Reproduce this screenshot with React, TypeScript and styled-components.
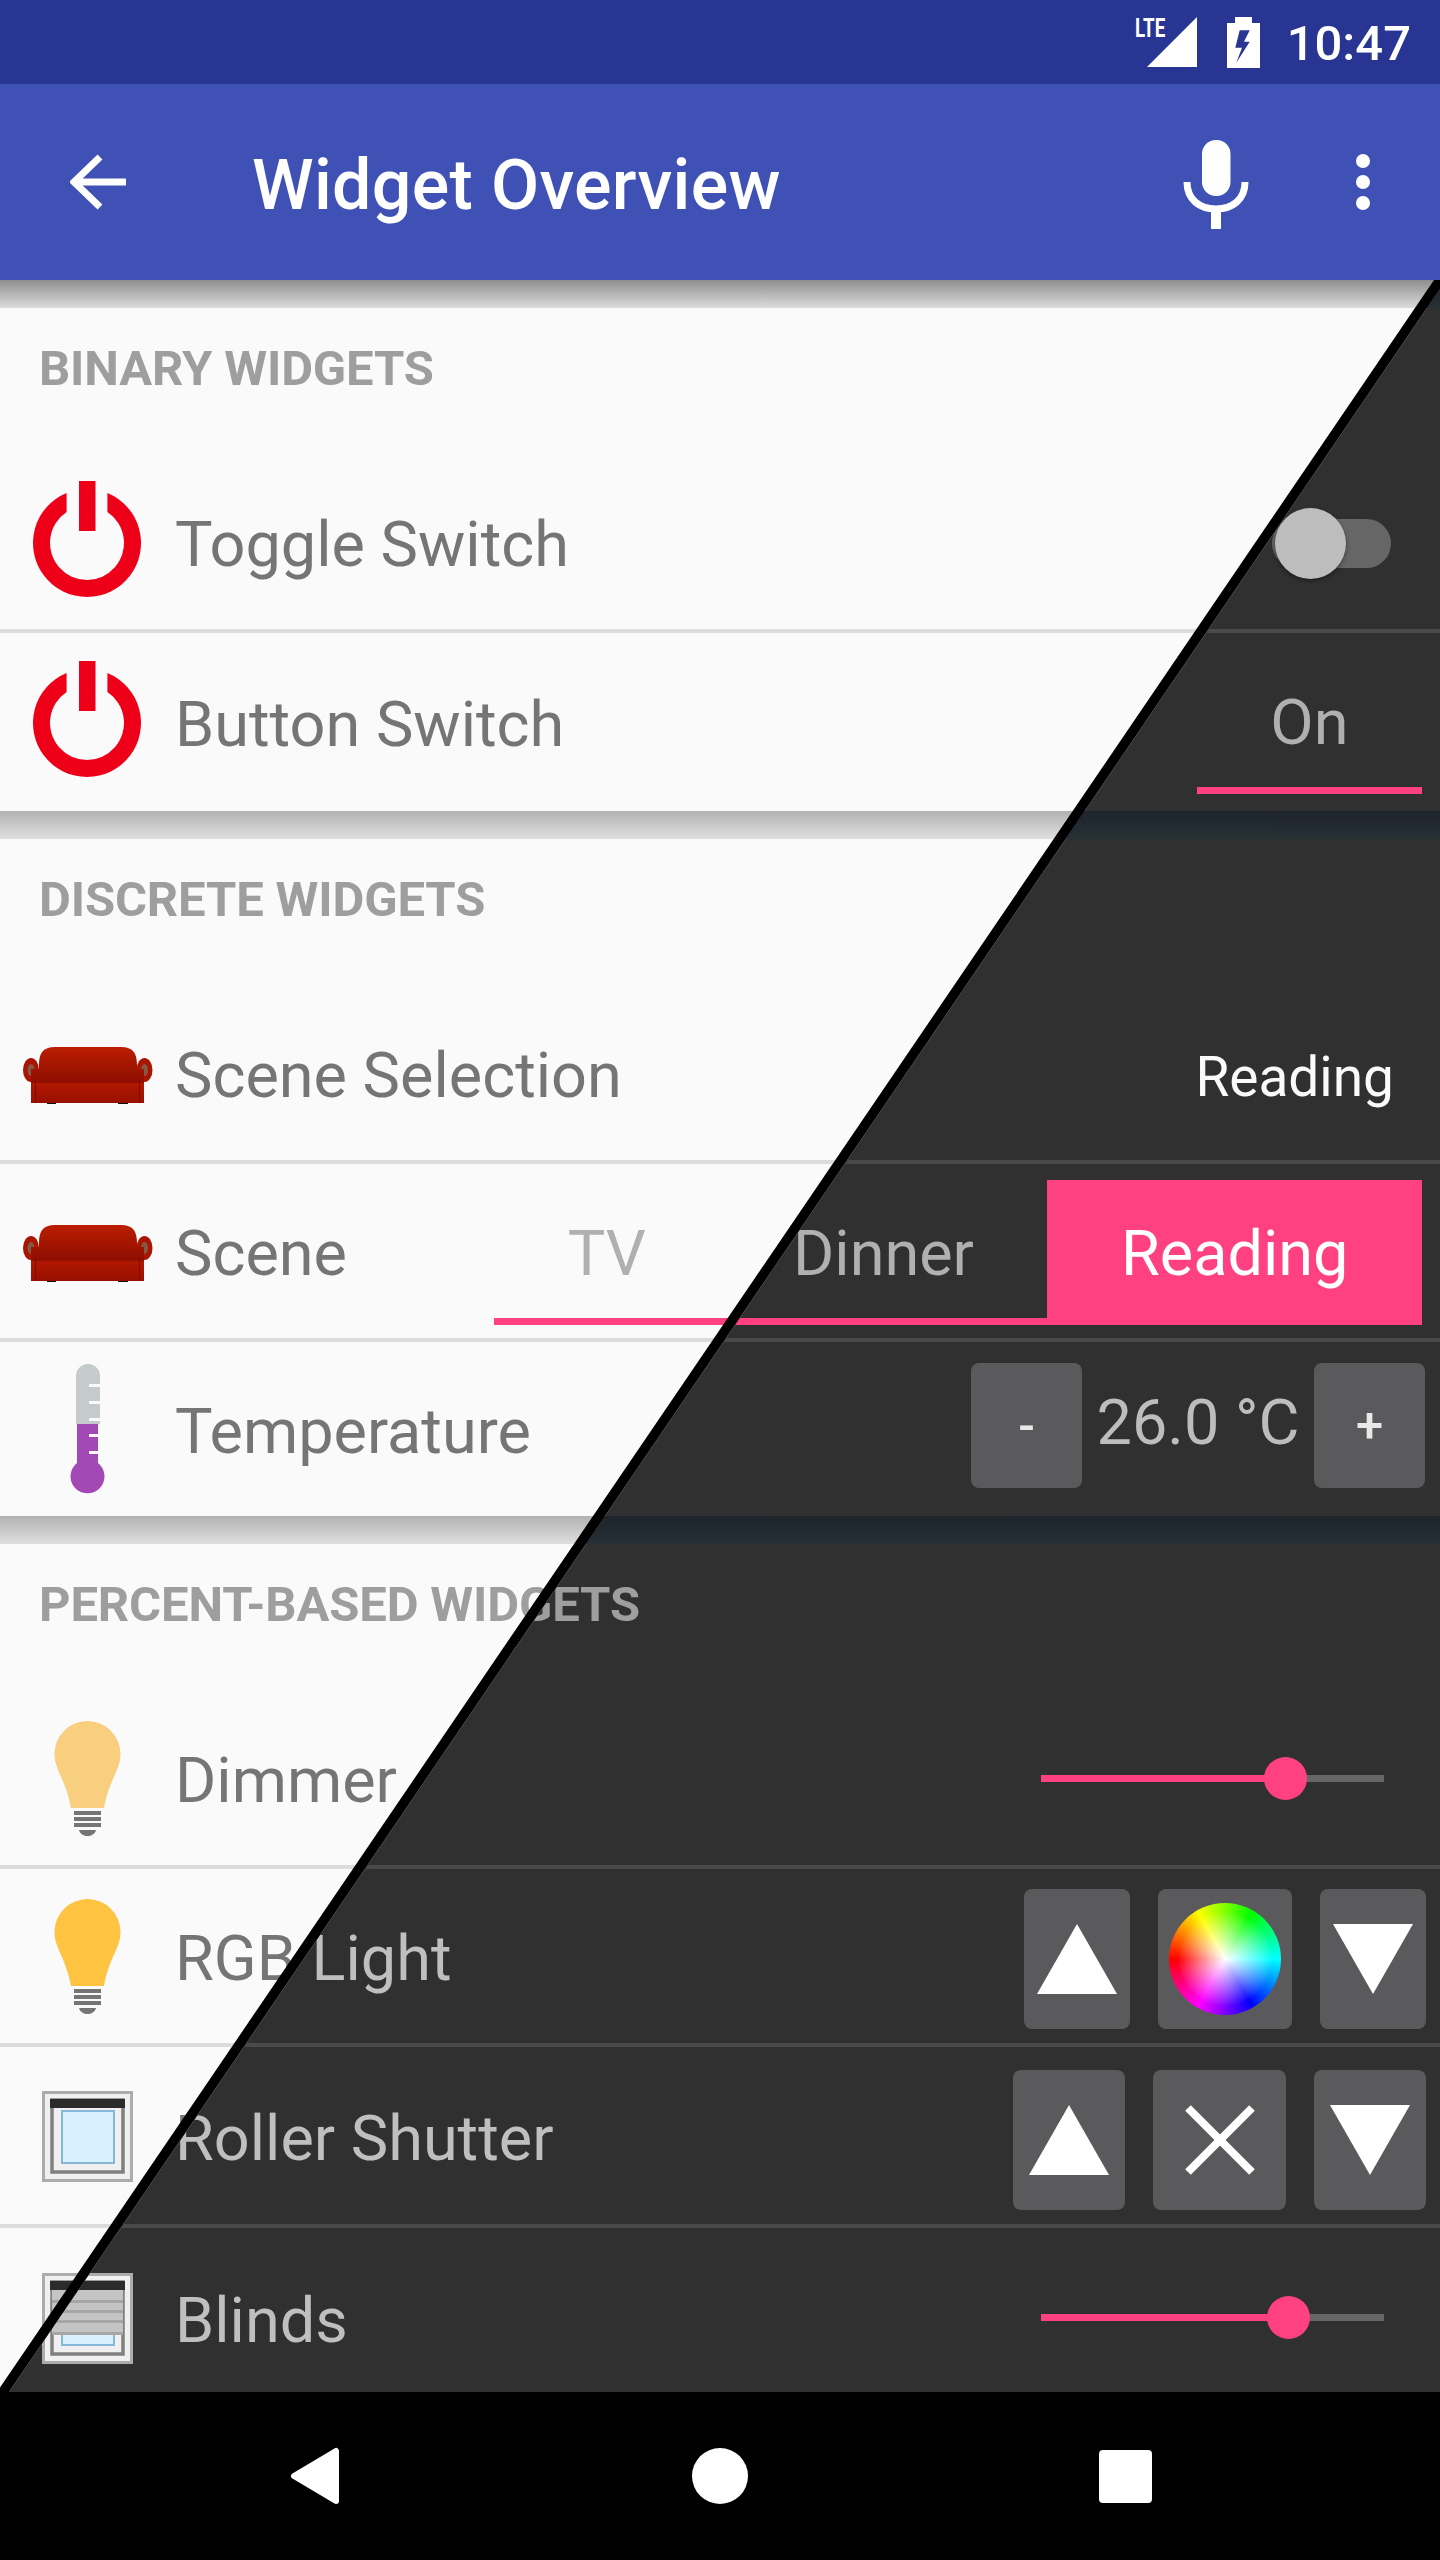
import React from "react";
import styled, { createGlobalStyle } from "styled-components";

type Layer = "light" | "dark";

const Global = createGlobalStyle`
  html, body {
    margin: 0;
    padding: 0;
    background: #000;
  }
  body {
    font-family: Roboto, "Liberation Sans", sans-serif;
  }
`;

const PINK = "#ff4081";
const BUTTON = "#5a5a5c";

const Screen = styled.div`
  width: 1440px;
  height: 2560px;
  display: flex;
  flex-direction: column;
  overflow: hidden;
`;

/* ---------- top bars ---------- */

const StatusBar = styled.div`
  height: 84px;
  flex-shrink: 0;
  background: #283593;
  display: flex;
  align-items: center;
  justify-content: flex-end;
  padding-right: 29px;
  color: #fff;
`;

const Signal = styled.div`
  position: relative;
  width: 62px;
  height: 50px;
  display: flex;
  justify-content: flex-end;
  margin-right: 30px;
`;

const Lte = styled.span`
  position: absolute;
  left: 0;
  top: -2px;
  font-size: 26px;
  line-height: 26px;
  font-weight: 700;
  transform: scaleX(0.72);
  transform-origin: left center;
`;

const Time = styled.span`
  font-size: 49px;
  line-height: 58px;
  font-weight: 500;
  margin-left: 27px;
  margin-top: 4px;
`;

const AppBar = styled.div`
  height: 196px;
  flex-shrink: 0;
  background: #3f51b5;
  display: flex;
  align-items: center;
  padding: 0 70px;
  color: #fff;
  position: relative;
  z-index: 2;
`;

const Title = styled.div`
  font-size: 70px;
  line-height: 82px;
  font-weight: 500;
  letter-spacing: 0.3px;
  margin-left: 126px;
  padding-top: 6px;
  flex: 1;
`;

const Mic = styled.svg`
  margin-top: 4px;
`;

const Dots = styled.svg`
  margin-left: 107px;
`;

/* ---------- body ---------- */

const Body = styled.div`
  flex: 1;
  position: relative;
  overflow: hidden;
`;

const DarkSide = styled.div`
  position: absolute;
  inset: 0;
  clip-path: polygon(1446px 0, 1446px 2112px, 9px 2112px);
`;

const SplitLine = styled.div`
  position: absolute;
  inset: 0;
  background: #000;
  clip-path: polygon(1434px 0, 1446px 0, 9px 2112px, -3px 2112px);
`;

const List = styled.div<{ $layer: Layer }>`
  background: ${(p) => (p.$layer === "light" ? "#fafafa" : "#303030")};
  color: ${(p) => (p.$layer === "light" ? "#757575" : "#bfbfbf")};
  height: 100%;
`;

const ShadowGap = styled.div<{ $layer: Layer; $top?: boolean }>`
  height: 28px;
  background: ${(p) =>
    p.$layer === "dark"
      ? "linear-gradient(#1e252c, #263035)"
      : p.$top
      ? "linear-gradient(#8e8e8e, #dcdcdc)"
      : "linear-gradient(#b2b2b2, #dfdfdf)"};
`;

const SectionHeader = styled.div`
  height: 147px;
  padding: 38px 0 0 39px;
  box-sizing: border-box;
  font-size: 49px;
  line-height: 46px;
  font-weight: 700;
  letter-spacing: -0.15px;
  color: #9e9e9e;
  white-space: nowrap;
`;

const Row = styled.div<{ $height: number; $layer: Layer; $last?: boolean }>`
  height: ${(p) => p.$height}px;
  box-sizing: border-box;
  display: flex;
  align-items: center;
  padding-left: 17px;
  border-bottom: ${(p) =>
    p.$last
      ? "none"
      : p.$layer === "light"
      ? "4px solid #dcdcdc"
      : "4px solid #4a4a4a"};
`;

const IconSlot = styled.div<{ $ghost?: boolean }>`
  width: 140px;
  height: 140px;
  flex-shrink: 0;
  visibility: ${(p) => (p.$ghost ? "hidden" : "visible")};
`;

const RowLabel = styled.div<{ $ghost?: boolean }>`
  margin-left: 18px;
  padding-top: 6px;
  flex: 1;
  font-size: 63px;
  line-height: 74px;
  white-space: nowrap;
  visibility: ${(p) => (p.$ghost ? "hidden" : "visible")};
`;

const ControlSlot = styled.div<{ $ghost?: boolean; $right: number; $top?: number }>`
  display: flex;
  margin-right: ${(p) => p.$right}px;
  visibility: ${(p) => (p.$ghost ? "hidden" : "visible")};
  ${(p) => (p.$top !== undefined ? `align-self: flex-start; margin-top: ${p.$top}px;` : "")}
`;

/* ---------- controls ---------- */

const SwitchBox = styled.div`
  position: relative;
  width: 119px;
  height: 49px;
  margin-top: 2px;
  border-radius: 25px;
  background: #666;
`;

const SwitchThumb = styled.div`
  position: absolute;
  left: 3px;
  top: -11px;
  width: 71px;
  height: 71px;
  border-radius: 50%;
  background: #bdbdbd;
  box-shadow: 0 2px 4px rgba(0, 0, 0, 0.4);
`;

const Tab = styled.div<{ $selected?: boolean }>`
  height: 145px;
  box-sizing: border-box;
  padding: 8px 73.5px 0;
  display: flex;
  align-items: center;
  font-size: 63px;
  color: ${(p) => (p.$selected ? "#fff" : "#b0b0b0")};
  background: ${(p) => (p.$selected ? PINK : "transparent")};
  border-bottom: 7px solid ${PINK};
`;

const TabText = styled.span<{ $ghost?: boolean }>`
  visibility: ${(p) => (p.$ghost ? "hidden" : "inherit")};
`;

const Selection = styled.div`
  padding-top: 8px;
  font-size: 55px;
  line-height: 66px;
  color: #fafafa;
`;

const FlatButton = styled.div<{ $width: number; $height?: number }>`
  width: ${(p) => p.$width}px;
  height: ${(p) => p.$height ?? 140}px;
  background: ${BUTTON};
  border-radius: 8px;
  display: flex;
  align-items: center;
  justify-content: center;
  color: #e8e8e8;
  font-size: 49px;
  font-weight: 500;
`;

const ButtonRow = styled.div`
  display: flex;
  gap: 28px;
`;

const Stepper = styled.div`
  display: flex;
`;

const StepperValue = styled.div`
  width: 232px;
  height: 125px;
  padding-bottom: 6px;
  box-sizing: border-box;
  display: flex;
  align-items: center;
  justify-content: center;
  font-size: 63px;
  color: #bdbdbd;
  white-space: nowrap;
`;

const Wheel = styled.div`
  width: 112px;
  height: 112px;
  border-radius: 50%;
  background: radial-gradient(circle closest-side, #fff 0, rgba(255, 255, 255, 0) 85%),
    conic-gradient(from 30deg, #0f0, #0ff, #00f, #f0f, #f00, #ff0, #0f0);
`;

const Slider = styled.div`
  position: relative;
  width: 343px;
  height: 7px;
  background: #666;
`;

const SliderFill = styled.div`
  height: 100%;
  background: ${PINK};
`;

const SliderThumb = styled.div`
  position: absolute;
  top: -18px;
  width: 43px;
  height: 43px;
  margin-left: -21px;
  border-radius: 50%;
  background: ${PINK};
`;

/* ---------- bottom bar ---------- */

const NavBar = styled.div`
  height: 168px;
  flex-shrink: 0;
  background: #000;
  display: flex;
  align-items: center;
  justify-content: center;
  gap: 348px;
  position: relative;
  z-index: 2;
`;

const NavCircle = styled.div`
  width: 56px;
  height: 56px;
  border-radius: 50%;
  background: #fff;
`;

const NavSquare = styled.div`
  width: 53px;
  height: 53px;
  margin-left: 3px;
  border-radius: 4px;
  background: #fff;
`;

/* ---------- drawings ---------- */

const PowerIcon = () => (
  <svg width="140" height="140" viewBox="0 0 140 140">
    <path
      d="M49.6 21A54 54 0 1 0 90.4 21V40.1A37 37 0 1 1 49.6 40.1Z"
      fill="#ee0019"
    />
    <rect x="62" y="9" width="16.5" height="50" fill="#ee0019" />
  </svg>
);

const SofaIcon = () => (
  <svg width="140" height="140" viewBox="0 0 140 140">
    <defs>
      <linearGradient id="sofa" x1="0" y1="0" x2="0" y2="1">
        <stop offset="0" stopColor="#bb1e00" />
        <stop offset="0.62" stopColor="#8f0e00" />
        <stop offset="0.66" stopColor="#b01800" />
        <stop offset="1" stopColor="#980f00" />
      </linearGradient>
    </defs>
    <rect x="30" y="98" width="9" height="3" fill="#111" />
    <rect x="101" y="98" width="10" height="3" fill="#111" />
    <ellipse cx="14" cy="67" rx="8" ry="12" fill="#a81500" />
    <ellipse cx="127.5" cy="67" rx="8" ry="12" fill="#a81500" />
    <ellipse cx="14" cy="67" rx="3.5" ry="6" fill="#85594a" />
    <ellipse cx="127.5" cy="67" rx="3.5" ry="6" fill="#85594a" />
    <path
      d="M22 62C22 50 26 44 38 44H104C116 44 120 50 120 62V66H127V100H14V66H22Z"
      fill="url(#sofa)"
    />
    <rect x="18" y="78" width="1" height="22" fill="#7d0b00" />
    <rect x="122" y="78" width="1" height="22" fill="#7d0b00" />
  </svg>
);

const ThermometerIcon = () => (
  <svg width="140" height="140" viewBox="0 0 140 140">
    <path d="M59 65V17A12 12 0 0 1 83 17V65Z" fill="#c5cacc" />
    <path d="M60 65H81V104A17 17 0 1 1 60 104Z" fill="#a349b5" />
    {[25, 42, 59, 75, 92].map((y) => (
      <rect key={y} x="72" y={y} width="12" height="3" fill="#fafafa" />
    ))}
  </svg>
);

const BulbIcon = ({ color }: { color: string }) => (
  <svg width="140" height="140" viewBox="0 0 140 140">
    <path
      d="M37.5 46A33 33 0 1 1 103.5 46C103.5 62 92 72 87 100H54C49 72 37.5 62 37.5 46Z"
      fill={color}
    />
    <g fill="#757575">
      <rect x="57" y="103" width="27" height="4" />
      <rect x="57" y="109" width="27" height="4" />
      <rect x="57" y="115" width="27" height="4" />
      <path d="M62 122H79C78 126 74 128 70.500 128C67 128 63 126 62 122Z" />
    </g>
  </svg>
);

const WindowIcon = ({ shade }: { shade?: boolean }) => (
  <svg width="140" height="140" viewBox="0 0 140 140">
    <rect x="26.500" y="26.500" width="88" height="88" fill="#f0f0f0" stroke="#acacac" strokeWidth="3" />
    <rect x="35" y="34" width="71" height="72" fill="#f0f0f0" stroke="#7f7f7f" strokeWidth="3.500" />
    <rect x="45" y="45" width="52" height="52" fill="#d9f0fe" stroke="#85b7d8" strokeWidth="2" />
    {shade && (
      <>
        <rect x="35" y="42" width="71" height="44" fill="#c4c4c4" />
        {[52, 62, 72, 84].map((y) => (
          <rect key={y} x="35" y={y} width="71" height="3" fill="#a6a6a6" />
        ))}
      </>
    )}
    <rect x="33" y="33" width="75" height="9" fill="#2b2b2b" />
  </svg>
);

const TriangleUp = () => (
  <svg width="80" height="70" viewBox="0 0 80 70">
    <polygon points="40,0 80,70 0,70" fill="#fff" />
  </svg>
);

const TriangleDown = () => (
  <svg width="80" height="70" viewBox="0 0 80 70">
    <polygon points="0,0 80,0 40,70" fill="#fff" />
  </svg>
);

const CrossIcon = () => (
  <svg width="70" height="70" viewBox="0 0 70 70">
    <path d="M3 3L67 67M67 3L3 67" stroke="#fff" strokeWidth="8" />
  </svg>
);

/* ---------- rows ---------- */

const PercentSlider = ({ value }: { value: number }) => (
  <Slider>
    <SliderFill style={{ width: `${value}%` }} />
    <SliderThumb style={{ left: `${value}%` }} />
  </Slider>
);

type RowData = {
  label: string;
  icon: React.ReactNode;
  height: number;
  labelIn: Layer | "both";
  iconIn?: Layer | "both";
  right: number;
  top?: number;
  control: (layer: Layer) => React.ReactNode;
  controlIn?: Layer | "both";
};

type SectionData = {
  title: string;
  titleIn: Layer | "both";
  rows: RowData[];
};

const sections: SectionData[] = [
  {
    title: "BINARY WIDGETS",
    titleIn: "light",
    rows: [
      {
        label: "Toggle Switch",
        icon: <PowerIcon />,
        height: 178,
        labelIn: "light",
        right: 49,
        control: () => (
          <SwitchBox>
            <SwitchThumb />
          </SwitchBox>
        ),
      },
      {
        label: "Button Switch",
        icon: <PowerIcon />,
        height: 178,
        labelIn: "light",
        right: 18,
        top: 16,
        control: () => <Tab>On</Tab>,
      },
    ],
  },
  {
    title: "DISCRETE WIDGETS",
    titleIn: "light",
    rows: [
      {
        label: "Scene Selection",
        icon: <SofaIcon />,
        height: 178,
        labelIn: "light",
        right: 46,
        control: () => <Selection>Reading</Selection>,
      },
      {
        label: "Scene",
        icon: <SofaIcon />,
        height: 178,
        labelIn: "light",
        right: 18,
        top: 16,
        controlIn: "both",
        control: (layer) => (
          <>
            <Tab>
              <TabText $ghost={layer === "dark"}>TV</TabText>
            </Tab>
            <Tab>
              <TabText $ghost={layer === "light"}>Dinner</TabText>
            </Tab>
            <Tab $selected>
              <TabText $ghost={layer === "light"}>Reading</TabText>
            </Tab>
          </>
        ),
      },
      {
        label: "Temperature",
        icon: <ThermometerIcon />,
        height: 174,
        labelIn: "light",
        right: 15,
        top: 21,
        control: () => (
          <Stepper>
            <FlatButton $width={111} $height={125}>-</FlatButton>
            <StepperValue>26.0 °C</StepperValue>
            <FlatButton $width={111} $height={125}>+</FlatButton>
          </Stepper>
        ),
      },
    ],
  },
  {
    title: "PERCENT-BASED WIDGETS",
    titleIn: "both",
    rows: [
      {
        label: "Dimmer",
        icon: <BulbIcon color="#f7cf7e" />,
        height: 178,
        labelIn: "light",
        right: 56,
        control: () => <PercentSlider value={71} />,
      },
      {
        label: "RGB Light",
        icon: <BulbIcon color="#ffc342" />,
        height: 178,
        labelIn: "both",
        right: 14,
        top: 20,
        control: () => (
          <ButtonRow>
            <FlatButton $width={106}>
              <TriangleUp />
            </FlatButton>
            <FlatButton $width={134}>
              <Wheel />
            </FlatButton>
            <FlatButton $width={106}>
              <TriangleDown />
            </FlatButton>
          </ButtonRow>
        ),
      },
      {
        label: "Roller Shutter",
        icon: <WindowIcon />,
        height: 181,
        labelIn: "both",
        right: 14,
        top: 23,
        control: () => (
          <ButtonRow>
            <FlatButton $width={112}>
              <TriangleUp />
            </FlatButton>
            <FlatButton $width={133}>
              <CrossIcon />
            </FlatButton>
            <FlatButton $width={112}>
              <TriangleDown />
            </FlatButton>
          </ButtonRow>
        ),
      },
      {
        label: "Blinds",
        icon: <WindowIcon shade />,
        height: 179,
        labelIn: "dark",
        iconIn: "both",
        right: 56,
        control: () => <PercentSlider value={72} />,
      },
    ],
  },
];

const isGhost = (where: Layer | "both", layer: Layer) =>
  where !== "both" && where !== layer;

const WidgetList = ({ layer }: { layer: Layer }) => (
  <List $layer={layer}>
    {sections.map((section, s) => (
      <React.Fragment key={section.title}>
        <ShadowGap $layer={layer} $top={s === 0} />
        <SectionHeader>
          {isGhost(section.titleIn, layer) ? null : section.title}
        </SectionHeader>
        {section.rows.map((row, i) => (
          <Row
            key={row.label}
            $height={row.height}
            $layer={layer}
            $last={i === section.rows.length - 1}
          >
            <IconSlot $ghost={isGhost(row.iconIn ?? "light", layer)}>{row.icon}</IconSlot>
            <RowLabel $ghost={isGhost(row.labelIn, layer)}>{row.label}</RowLabel>
            <ControlSlot
              $ghost={isGhost(row.controlIn ?? "dark", layer)}
              $right={row.right}
              $top={row.top}
            >
              {row.control(layer)}
            </ControlSlot>
          </Row>
        ))}
      </React.Fragment>
    ))}
  </List>
);

export default function App() {
  return (
    <Screen>
      <Global />
      <StatusBar>
        <Signal>
          <Lte>LTE</Lte>
          <svg width="50" height="50" viewBox="0 0 50 50">
            <polygon points="50,0 50,50 0,50" fill="#fff" />
          </svg>
        </Signal>
        <svg width="33" height="51" viewBox="0 0 33 51">
          <path
            d="M8 0H25V6H33V51H0V6H8ZM12.700 13.300H22.700L17 24.700H22.700L9.300 45.700L15 30.700H8.300Z"
            fill="#fff"
            fillRule="evenodd"
          />
        </svg>
        <Time>10:47</Time>
      </StatusBar>
      <AppBar>
        <svg width="56" height="56" viewBox="0 0 56 56">
          <path
            d="M56 28H5M30 3L4 28L30 53"
            fill="none"
            stroke="#fff"
            strokeWidth="7"
          />
        </svg>
        <Title>Widget Overview</Title>
        <Mic width="66" height="89" viewBox="0 0 66 89">
          <rect x="19" y="0" width="28.500" height="56" rx="14" fill="#fff" />
          <path
            d="M4 42C4 60 17 69 33 69S62 60 62 42"
            fill="none"
            stroke="#fff"
            strokeWidth="7"
          />
          <rect x="28" y="70" width="10" height="19" fill="#fff" />
        </Mic>
        <Dots width="14" height="56" viewBox="0 0 14 56">
          <circle cx="7" cy="7" r="7" fill="#fff" />
          <circle cx="7" cy="28" r="7" fill="#fff" />
          <circle cx="7" cy="49" r="7" fill="#fff" />
        </Dots>
      </AppBar>
      <Body>
        <WidgetList layer="light" />
        <DarkSide>
          <WidgetList layer="dark" />
        </DarkSide>
        <SplitLine />
      </Body>
      <NavBar>
        <svg width="56" height="60" viewBox="0 0 56 60">
          <polygon
            points="48,5 48,55 6,30"
            fill="#fff"
            stroke="#fff"
            strokeWidth="6"
            strokeLinejoin="round"
          />
        </svg>
        <NavCircle />
        <NavSquare />
      </NavBar>
    </Screen>
  );
}
